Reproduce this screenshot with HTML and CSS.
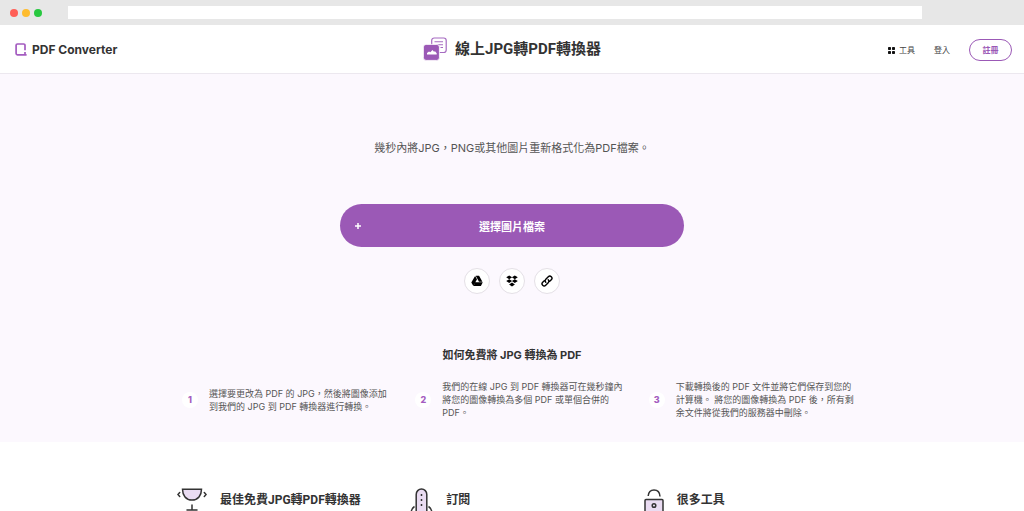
FILE: index.html
```html
<!DOCTYPE html>
<html lang="zh-Hant">
<head>
<meta charset="utf-8">
<meta name="viewport" content="width=device-width, initial-scale=1">
<title>線上JPG轉PDF轉換器</title>
<link rel="stylesheet" href="styles.css">
</head>
<body>
<div class="browser-bar">
  <div class="lights"><span class="light red"></span><span class="light yellow"></span><span class="light green"></span></div>
  <input class="address" type="text" aria-label="網址">
</div>
<header class="header">
  <a class="brand" href="#">
    <svg class="brand-icon" viewBox="0 0 12 13" fill="none" stroke="#a45cc0" stroke-width="1.7"><path d="M10 7.200V2.300Q10 1 8.700 1H2.400Q1.100 1 1.100 2.300v8.200q0 1.300 1.300 1.300h9.200M10 9v2.800"/></svg>
    <span>PDF Converter</span>
  </a>
  <h1 class="title">
    <svg class="title-icon" viewBox="0 0 24 24"><rect x="8.700" y="1" width="14.500" height="14.500" rx="2.500" fill="#fff" stroke="#a66bc1" stroke-width="1.200"/><path d="M11.500 4.800h8.500M14 7.800h6M17.500 10.500h2.500" stroke="#a66bc1" stroke-width="1.100"/><rect x=".4" y="7.400" width="16" height="16" rx="2.700" fill="#9b59b6" stroke="#fff" stroke-width=".8"/><path d="M4 17.500v-1.500l2-1.600 1.300.9L9.500 13l1.500 1.700 1-.5 1.700 2v1.300z" fill="#fff"/></svg>
    <span>線上JPG轉PDF轉換器</span>
  </h1>
  <nav class="nav">
    <a class="tools" href="#"><svg class="grid-icon" viewBox="0 0 7 7" fill="#111"><rect width="3" height="3" rx=".7"/><rect x="4" width="3" height="3" rx=".7"/><rect y="4" width="3" height="3" rx=".7"/><rect x="4" y="4" width="3" height="3" rx=".7"/></svg>工具</a>
    <a href="#">登入</a>
    <a class="signup" href="#">註冊</a>
  </nav>
</header>
<main>
  <section class="hero">
    <p class="lead">幾秒內將JPG，PNG或其他圖片重新格式化為PDF檔案。</p>
    <button class="choose" type="button">
      <svg class="plus" viewBox="0 0 8 8" stroke="#fff" stroke-width="1.500"><path d="M4 1v6M1 4h6"/></svg>
      <span>選擇圖片檔案</span>
    </button>
    <div class="sources">
      <button type="button" aria-label="Google Drive"><svg viewBox="0 0 12 12"><path d="M4.100.9 6 4.200 2.300 10.900.3 7.500zM4.700.7h3.400l3.300 6H8zM4.300 7.300h7.500l-1.900 3.600H2.600z"/></svg></button>
      <button type="button" aria-label="Dropbox"><svg viewBox="0 0 12 12"><path d="m3.200.4 2.900 1.900-2.900 1.900L.2 2.300zM8.800.4l3 1.900-3 1.900-2.900-1.900zM3.200 4.200 6.100 6.100 3.200 8 .2 6.100zM8.800 4.200l3 1.900-3 1.900-2.900-1.900zM6 7.500l2.900 1.900L6 11.400 3.100 9.400z"/></svg></button>
      <button type="button" aria-label="連結"><svg viewBox="0 0 12 12" fill="none" stroke="#000" stroke-width="1.400" stroke-linecap="round"><path d="M4.800 7.200a2.100 2.100 0 0 1 0-3L7.300 1.700a2.100 2.100 0 0 1 3 3L8.700 6.300M7.200 4.800a2.100 2.100 0 0 1 0 3L4.700 10.300a2.100 2.100 0 0 1-3-3L3.300 5.700"/></svg></button>
    </div>
    <h2 class="how">如何免費將 JPG 轉換為 PDF</h2>
    <ol class="steps">
      <li><span class="num">1</span><p>選擇要更改為 PDF 的 JPG，然後將圖像添加到我們的 JPG 到 PDF 轉換器進行轉換。</p></li>
      <li><span class="num">2</span><p>我們的在線 JPG 到 PDF 轉換器可在幾秒鐘內將您的圖像轉換為多個 PDF 或單個合併的 PDF。</p></li>
      <li><span class="num">3</span><p>下載轉換後的 PDF 文件並將它們保存到您的計算機。 將您的圖像轉換為 PDF 後，所有剩余文件將從我們的服務器中刪除。</p></li>
    </ol>
  </section>
  <section class="features">
    <article>
      <svg width="30" height="30" viewBox="0 0 30 30" fill="none" stroke="#333" stroke-width="1.500" stroke-linecap="round"><path d="M5.500 1.300h19c0 6-3.500 10.700-9.500 10.700S5.500 7.300 5.500 1.300z" fill="#eadcf2"/><path d="M2.700 4.500.9 6.500l1.800 2M27.300 4.500l1.800 2-1.800 2M15 17v5M10 22h10"/></svg>
      <h3>最佳免費JPG轉PDF轉換器</h3>
    </article>
    <article>
      <svg width="23" height="30" viewBox="0 0 23 30" fill="none" stroke="#333" stroke-width="1.500"><path d="M6.200 28V6.500C6.200 3.500 8.500 1 11.500 1s5.300 2.500 5.300 5.500V28z" fill="#eadcf2"/><path d="M4.500 18.500Q1 20.500.8 27M18.500 18.500q3.500 2 3.700 8.500"/><path d="M11.500 6v2M11.500 11v2M11.500 16v2"/></svg>
      <h3>訂閱</h3>
    </article>
    <article>
      <svg width="20" height="30" viewBox="0 0 20 30" fill="none" stroke="#333" stroke-width="1.500"><path d="M4.200 8C4.500 4.500 6.500 2 10 2s5.800 2.500 6 6.500"/><rect x="1" y="11.500" width="18" height="13" rx="1" fill="#eadcf2"/><circle cx="10" cy="17.500" r="1.800"/></svg>
      <h3>很多工具</h3>
    </article>
  </section>
</main>
</body>
</html>
```
FILE: styles.css
```css
* { box-sizing: border-box; }
html { overflow: hidden; }
body { margin: 0; background: #fff; color: #333; font-family: Inter, "Noto Sans CJK TC", sans-serif; }
a { color: inherit; text-decoration: none; }
h1, h2, h3, p, ol { margin: 0; padding: 0; }
button { font: inherit; cursor: pointer; }
svg { flex: none; }

.browser-bar { display: flex; align-items: center; height: 25px; padding: 0 102px 0 10px; background: #e7e7e7; }
.lights { display: flex; gap: 4px; width: 58px; flex: none; }
.light { width: 8px; height: 8px; border-radius: 50%; }
.red { background: #ff5f57; }
.yellow { background: #febc2e; }
.green { background: #28c840; }
.address { flex: 1; min-width: 0; height: 13px; padding: 0 4px; border: 0; background: #fff; font-size: 9px; }

.header { display: grid; grid-template-columns: 1fr auto 1fr; align-items: center; height: 49px; padding: 0 12px; border-bottom: 1px solid #ece8ef; }
.brand { display: flex; align-items: center; gap: 5px; padding-left: 3px; font-size: 12px; font-weight: 700; }
.brand-icon { width: 12px; height: 13px; }
.title { display: flex; align-items: center; gap: 8px; font-family: Roboto, "Noto Sans CJK TC", sans-serif; font-size: 15px; line-height: 24px; font-weight: 700; }
.title-icon { width: 24px; height: 24px; }
.nav { display: flex; align-items: center; justify-content: flex-end; gap: 19px; padding-top: 2px; color: #444; font-size: 8px; line-height: 12px; }
.tools { display: flex; align-items: center; gap: 4px; }
.grid-icon { width: 7px; height: 7px; }
.signup { width: 43px; padding: 4px 0; border: 1px solid #9b59b6; border-radius: 11px; color: #9b59b6; font-weight: 700; text-align: center; }

.hero { display: flex; flex-direction: column; align-items: center; padding: 64px 20px 23px; background: #fcf8fe; }
.lead { color: #555; font-size: 11px; line-height: 20px; }
.choose { display: grid; grid-template-columns: 8px 1fr 8px; align-items: center; width: 344px; max-width: 100%; height: 43px; margin-top: 46px; padding: 0 14px; border: 0; border-radius: 22px; background: #9b59b6; color: #fff; font-size: 11px; font-weight: 700; }
.plus { width: 8px; height: 8px; }
.sources { display: flex; gap: 9px; margin-top: 21px; }
.sources button { display: flex; align-items: center; justify-content: center; width: 26px; height: 26px; padding: 0; border: 1px solid #e4e0e6; border-radius: 50%; background: #fff; }
.sources svg { width: 12px; height: 12px; }
.how { margin-top: 53px; font-size: 11px; line-height: 16px; font-weight: 700; }

.steps, .features { display: grid; grid-template-columns: repeat(3, 1fr); width: 100%; max-width: 700px; }
.steps { margin-top: 17px; list-style: none; }
.steps li { display: flex; align-items: center; gap: 11px; padding: 0 6px 0 20px; }
.steps p { color: #555; font-size: 9px; line-height: 13px; }
.num { display: flex; align-items: center; justify-content: center; flex: none; width: 16px; height: 16px; border-radius: 50%; background: #fff; color: #a45cc0; font-size: 9px; font-weight: 800; }

.features { margin: 0 auto; padding-top: 46px; }
.features article { display: flex; align-items: flex-start; gap: 13px; padding-left: 15px; }
.features h3 { font-family: Roboto, "Noto Sans CJK TC", sans-serif; font-size: 12px; line-height: 24px; font-weight: 700; }
```
